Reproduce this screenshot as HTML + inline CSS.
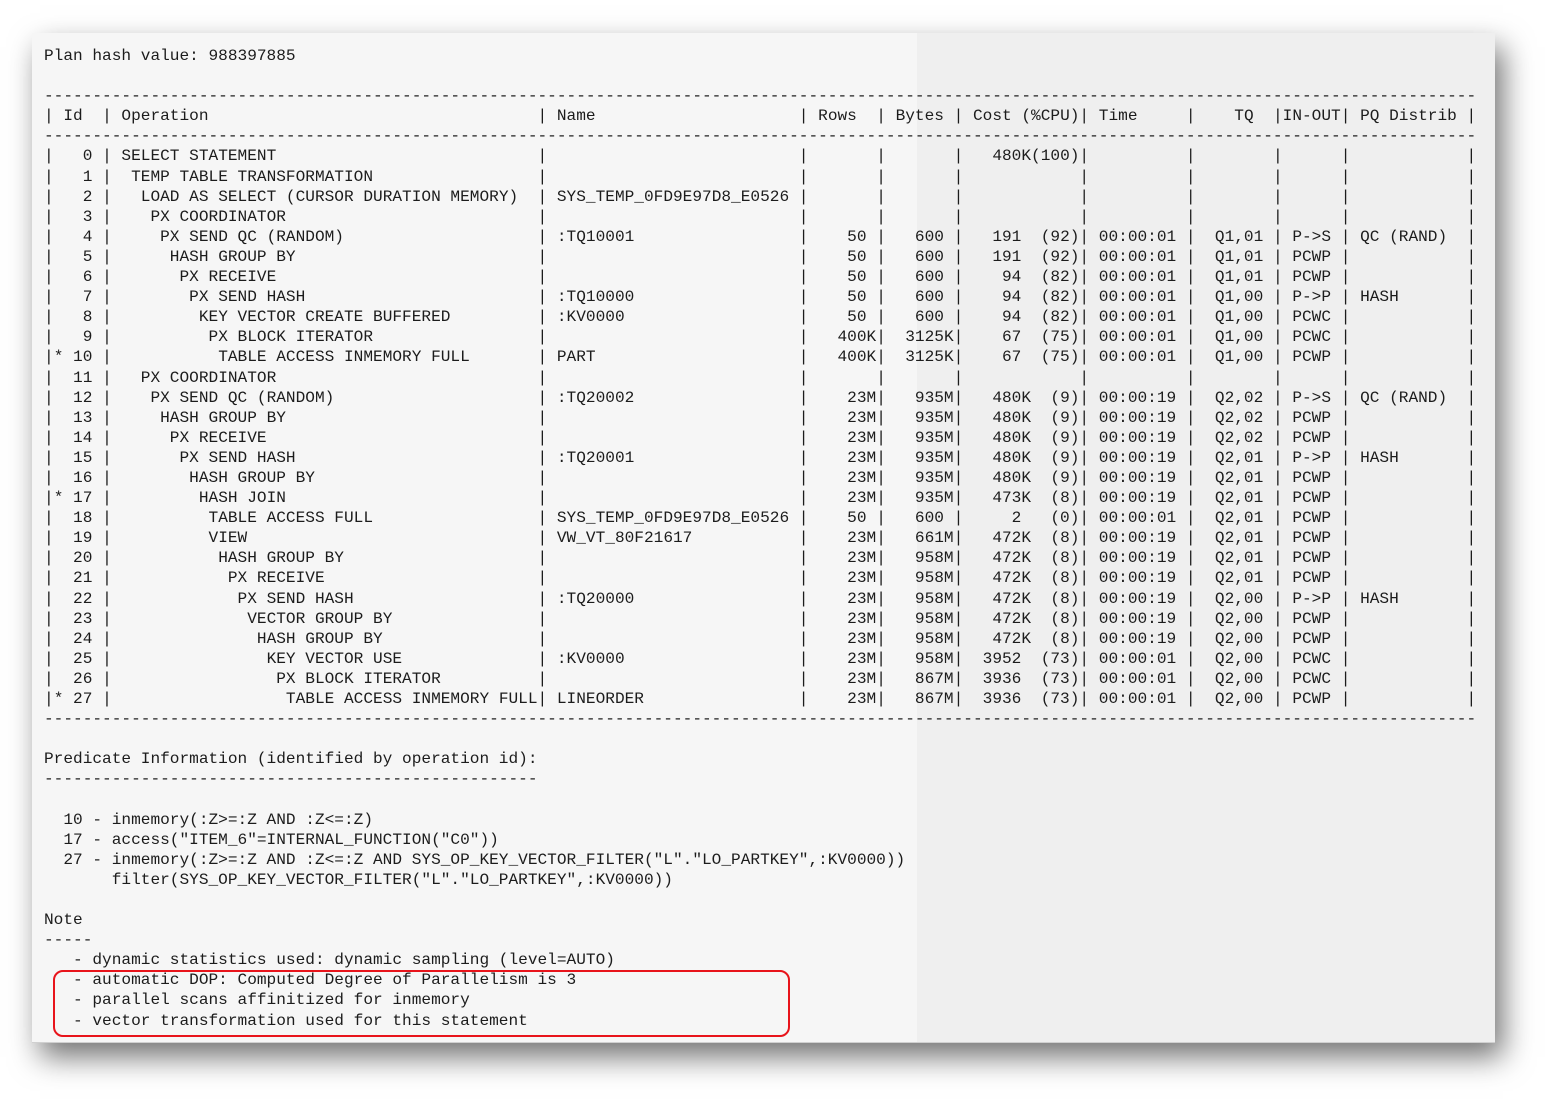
<!DOCTYPE html>
<html><head><meta charset="utf-8"><style>
html,body{margin:0;padding:0;background:#fff;width:1558px;height:1106px;overflow:hidden}
#p{position:absolute;left:32px;top:33px;width:1463px;height:1009px;background:linear-gradient(to right,#f6f6f6 0,#f6f6f6 885px,#efefef 885px);box-shadow:8px 14px 28px rgba(0,0,0,0.55);border-bottom:1px solid #d0d0d0}
#t{position:absolute;left:44px;top:46px;font-family:"Liberation Mono",monospace;font-size:16.14px;line-height:20.1px;color:#1c1c1c}
#t div{height:20.1px;white-space:pre}
span{display:inline-block;white-space:pre;vertical-align:top}
.i{width:5ch;text-align:right}.o{width:44ch}.n{width:26ch}.r{width:7ch;text-align:right}.b{width:7ch;text-align:right}.c{width:12ch;text-align:right}.m{width:10ch}.q{width:8ch;text-align:right}.x{width:6ch}.d{width:12ch}
#box{position:absolute;left:53px;top:970px;width:733px;height:63px;border:2px solid #e8141b;border-radius:10px}
</style></head><body>
<div id="p"></div>
<div id="t"><div>Plan hash value: 988397885</div><div> </div><div>----------------------------------------------------------------------------------------------------------------------------------------------------</div><div>|<span class="i" style="text-align:left"> Id  </span>|<span class="o"> Operation</span>|<span class="n"> Name</span>|<span class="r" style="text-align:left"> Rows  </span>|<span class="b" style="text-align:left"> Bytes </span>|<span class="c" style="text-align:left"> Cost (%CPU)</span>|<span class="m"> Time</span>|<span class="q" style="text-align:left">    TQ  </span>|<span class="x">IN-OUT</span>|<span class="d"> PQ Distrib </span>|</div><div>----------------------------------------------------------------------------------------------------------------------------------------------------</div>
<div>|<span class="i">0 </span>|<span class="o"> SELECT STATEMENT</span>|<span class="n"></span>|<span class="r"></span>|<span class="b"></span>|<span class="c">480K(100)</span>|<span class="m"></span>|<span class="q"></span>|<span class="x"></span>|<span class="d"></span>|</div>
<div>|<span class="i">1 </span>|<span class="o">  TEMP TABLE TRANSFORMATION</span>|<span class="n"></span>|<span class="r"></span>|<span class="b"></span>|<span class="c"></span>|<span class="m"></span>|<span class="q"></span>|<span class="x"></span>|<span class="d"></span>|</div>
<div>|<span class="i">2 </span>|<span class="o">   LOAD AS SELECT (CURSOR DURATION MEMORY)</span>|<span class="n"> SYS_TEMP_0FD9E97D8_E0526</span>|<span class="r"></span>|<span class="b"></span>|<span class="c"></span>|<span class="m"></span>|<span class="q"></span>|<span class="x"></span>|<span class="d"></span>|</div>
<div>|<span class="i">3 </span>|<span class="o">    PX COORDINATOR</span>|<span class="n"></span>|<span class="r"></span>|<span class="b"></span>|<span class="c"></span>|<span class="m"></span>|<span class="q"></span>|<span class="x"></span>|<span class="d"></span>|</div>
<div>|<span class="i">4 </span>|<span class="o">     PX SEND QC (RANDOM)</span>|<span class="n"> :TQ10001</span>|<span class="r">50 </span>|<span class="b">600 </span>|<span class="c">191  (92)</span>|<span class="m"> 00:00:01</span>|<span class="q">Q1,01 </span>|<span class="x"> P-&gt;S</span>|<span class="d"> QC (RAND)</span>|</div>
<div>|<span class="i">5 </span>|<span class="o">      HASH GROUP BY</span>|<span class="n"></span>|<span class="r">50 </span>|<span class="b">600 </span>|<span class="c">191  (92)</span>|<span class="m"> 00:00:01</span>|<span class="q">Q1,01 </span>|<span class="x"> PCWP</span>|<span class="d"></span>|</div>
<div>|<span class="i">6 </span>|<span class="o">       PX RECEIVE</span>|<span class="n"></span>|<span class="r">50 </span>|<span class="b">600 </span>|<span class="c">94  (82)</span>|<span class="m"> 00:00:01</span>|<span class="q">Q1,01 </span>|<span class="x"> PCWP</span>|<span class="d"></span>|</div>
<div>|<span class="i">7 </span>|<span class="o">        PX SEND HASH</span>|<span class="n"> :TQ10000</span>|<span class="r">50 </span>|<span class="b">600 </span>|<span class="c">94  (82)</span>|<span class="m"> 00:00:01</span>|<span class="q">Q1,00 </span>|<span class="x"> P-&gt;P</span>|<span class="d"> HASH</span>|</div>
<div>|<span class="i">8 </span>|<span class="o">         KEY VECTOR CREATE BUFFERED</span>|<span class="n"> :KV0000</span>|<span class="r">50 </span>|<span class="b">600 </span>|<span class="c">94  (82)</span>|<span class="m"> 00:00:01</span>|<span class="q">Q1,00 </span>|<span class="x"> PCWC</span>|<span class="d"></span>|</div>
<div>|<span class="i">9 </span>|<span class="o">          PX BLOCK ITERATOR</span>|<span class="n"></span>|<span class="r">400K</span>|<span class="b">3125K</span>|<span class="c">67  (75)</span>|<span class="m"> 00:00:01</span>|<span class="q">Q1,00 </span>|<span class="x"> PCWC</span>|<span class="d"></span>|</div>
<div>|<span class="i" style="text-align:left">* 10 </span>|<span class="o">           TABLE ACCESS INMEMORY FULL</span>|<span class="n"> PART</span>|<span class="r">400K</span>|<span class="b">3125K</span>|<span class="c">67  (75)</span>|<span class="m"> 00:00:01</span>|<span class="q">Q1,00 </span>|<span class="x"> PCWP</span>|<span class="d"></span>|</div>
<div>|<span class="i">11 </span>|<span class="o">   PX COORDINATOR</span>|<span class="n"></span>|<span class="r"></span>|<span class="b"></span>|<span class="c"></span>|<span class="m"></span>|<span class="q"></span>|<span class="x"></span>|<span class="d"></span>|</div>
<div>|<span class="i">12 </span>|<span class="o">    PX SEND QC (RANDOM)</span>|<span class="n"> :TQ20002</span>|<span class="r">23M</span>|<span class="b">935M</span>|<span class="c">480K  (9)</span>|<span class="m"> 00:00:19</span>|<span class="q">Q2,02 </span>|<span class="x"> P-&gt;S</span>|<span class="d"> QC (RAND)</span>|</div>
<div>|<span class="i">13 </span>|<span class="o">     HASH GROUP BY</span>|<span class="n"></span>|<span class="r">23M</span>|<span class="b">935M</span>|<span class="c">480K  (9)</span>|<span class="m"> 00:00:19</span>|<span class="q">Q2,02 </span>|<span class="x"> PCWP</span>|<span class="d"></span>|</div>
<div>|<span class="i">14 </span>|<span class="o">      PX RECEIVE</span>|<span class="n"></span>|<span class="r">23M</span>|<span class="b">935M</span>|<span class="c">480K  (9)</span>|<span class="m"> 00:00:19</span>|<span class="q">Q2,02 </span>|<span class="x"> PCWP</span>|<span class="d"></span>|</div>
<div>|<span class="i">15 </span>|<span class="o">       PX SEND HASH</span>|<span class="n"> :TQ20001</span>|<span class="r">23M</span>|<span class="b">935M</span>|<span class="c">480K  (9)</span>|<span class="m"> 00:00:19</span>|<span class="q">Q2,01 </span>|<span class="x"> P-&gt;P</span>|<span class="d"> HASH</span>|</div>
<div>|<span class="i">16 </span>|<span class="o">        HASH GROUP BY</span>|<span class="n"></span>|<span class="r">23M</span>|<span class="b">935M</span>|<span class="c">480K  (9)</span>|<span class="m"> 00:00:19</span>|<span class="q">Q2,01 </span>|<span class="x"> PCWP</span>|<span class="d"></span>|</div>
<div>|<span class="i" style="text-align:left">* 17 </span>|<span class="o">         HASH JOIN</span>|<span class="n"></span>|<span class="r">23M</span>|<span class="b">935M</span>|<span class="c">473K  (8)</span>|<span class="m"> 00:00:19</span>|<span class="q">Q2,01 </span>|<span class="x"> PCWP</span>|<span class="d"></span>|</div>
<div>|<span class="i">18 </span>|<span class="o">          TABLE ACCESS FULL</span>|<span class="n"> SYS_TEMP_0FD9E97D8_E0526</span>|<span class="r">50 </span>|<span class="b">600 </span>|<span class="c">2   (0)</span>|<span class="m"> 00:00:01</span>|<span class="q">Q2,01 </span>|<span class="x"> PCWP</span>|<span class="d"></span>|</div>
<div>|<span class="i">19 </span>|<span class="o">          VIEW</span>|<span class="n"> VW_VT_80F21617</span>|<span class="r">23M</span>|<span class="b">661M</span>|<span class="c">472K  (8)</span>|<span class="m"> 00:00:19</span>|<span class="q">Q2,01 </span>|<span class="x"> PCWP</span>|<span class="d"></span>|</div>
<div>|<span class="i">20 </span>|<span class="o">           HASH GROUP BY</span>|<span class="n"></span>|<span class="r">23M</span>|<span class="b">958M</span>|<span class="c">472K  (8)</span>|<span class="m"> 00:00:19</span>|<span class="q">Q2,01 </span>|<span class="x"> PCWP</span>|<span class="d"></span>|</div>
<div>|<span class="i">21 </span>|<span class="o">            PX RECEIVE</span>|<span class="n"></span>|<span class="r">23M</span>|<span class="b">958M</span>|<span class="c">472K  (8)</span>|<span class="m"> 00:00:19</span>|<span class="q">Q2,01 </span>|<span class="x"> PCWP</span>|<span class="d"></span>|</div>
<div>|<span class="i">22 </span>|<span class="o">             PX SEND HASH</span>|<span class="n"> :TQ20000</span>|<span class="r">23M</span>|<span class="b">958M</span>|<span class="c">472K  (8)</span>|<span class="m"> 00:00:19</span>|<span class="q">Q2,00 </span>|<span class="x"> P-&gt;P</span>|<span class="d"> HASH</span>|</div>
<div>|<span class="i">23 </span>|<span class="o">              VECTOR GROUP BY</span>|<span class="n"></span>|<span class="r">23M</span>|<span class="b">958M</span>|<span class="c">472K  (8)</span>|<span class="m"> 00:00:19</span>|<span class="q">Q2,00 </span>|<span class="x"> PCWP</span>|<span class="d"></span>|</div>
<div>|<span class="i">24 </span>|<span class="o">               HASH GROUP BY</span>|<span class="n"></span>|<span class="r">23M</span>|<span class="b">958M</span>|<span class="c">472K  (8)</span>|<span class="m"> 00:00:19</span>|<span class="q">Q2,00 </span>|<span class="x"> PCWP</span>|<span class="d"></span>|</div>
<div>|<span class="i">25 </span>|<span class="o">                KEY VECTOR USE</span>|<span class="n"> :KV0000</span>|<span class="r">23M</span>|<span class="b">958M</span>|<span class="c">3952  (73)</span>|<span class="m"> 00:00:01</span>|<span class="q">Q2,00 </span>|<span class="x"> PCWC</span>|<span class="d"></span>|</div>
<div>|<span class="i">26 </span>|<span class="o">                 PX BLOCK ITERATOR</span>|<span class="n"></span>|<span class="r">23M</span>|<span class="b">867M</span>|<span class="c">3936  (73)</span>|<span class="m"> 00:00:01</span>|<span class="q">Q2,00 </span>|<span class="x"> PCWC</span>|<span class="d"></span>|</div>
<div>|<span class="i" style="text-align:left">* 27 </span>|<span class="o">                  TABLE ACCESS INMEMORY FULL</span>|<span class="n"> LINEORDER</span>|<span class="r">23M</span>|<span class="b">867M</span>|<span class="c">3936  (73)</span>|<span class="m"> 00:00:01</span>|<span class="q">Q2,00 </span>|<span class="x"> PCWP</span>|<span class="d"></span>|</div>
<div>----------------------------------------------------------------------------------------------------------------------------------------------------</div><div> </div><div>Predicate Information (identified by operation id):</div><div>---------------------------------------------------</div><div> </div><div>  10 - inmemory(:Z&gt;=:Z AND :Z&lt;=:Z)</div><div>  17 - access("ITEM_6"=INTERNAL_FUNCTION("C0"))</div><div>  27 - inmemory(:Z&gt;=:Z AND :Z&lt;=:Z AND SYS_OP_KEY_VECTOR_FILTER("L"."LO_PARTKEY",:KV0000))</div><div>       filter(SYS_OP_KEY_VECTOR_FILTER("L"."LO_PARTKEY",:KV0000))</div><div> </div><div>Note</div><div>-----</div><div>   - dynamic statistics used: dynamic sampling (level=AUTO)</div><div>   - automatic DOP: Computed Degree of Parallelism is 3</div><div>   - parallel scans affinitized for inmemory</div><div>   - vector transformation used for this statement</div></div>
<div id="box"></div>
</body></html>
